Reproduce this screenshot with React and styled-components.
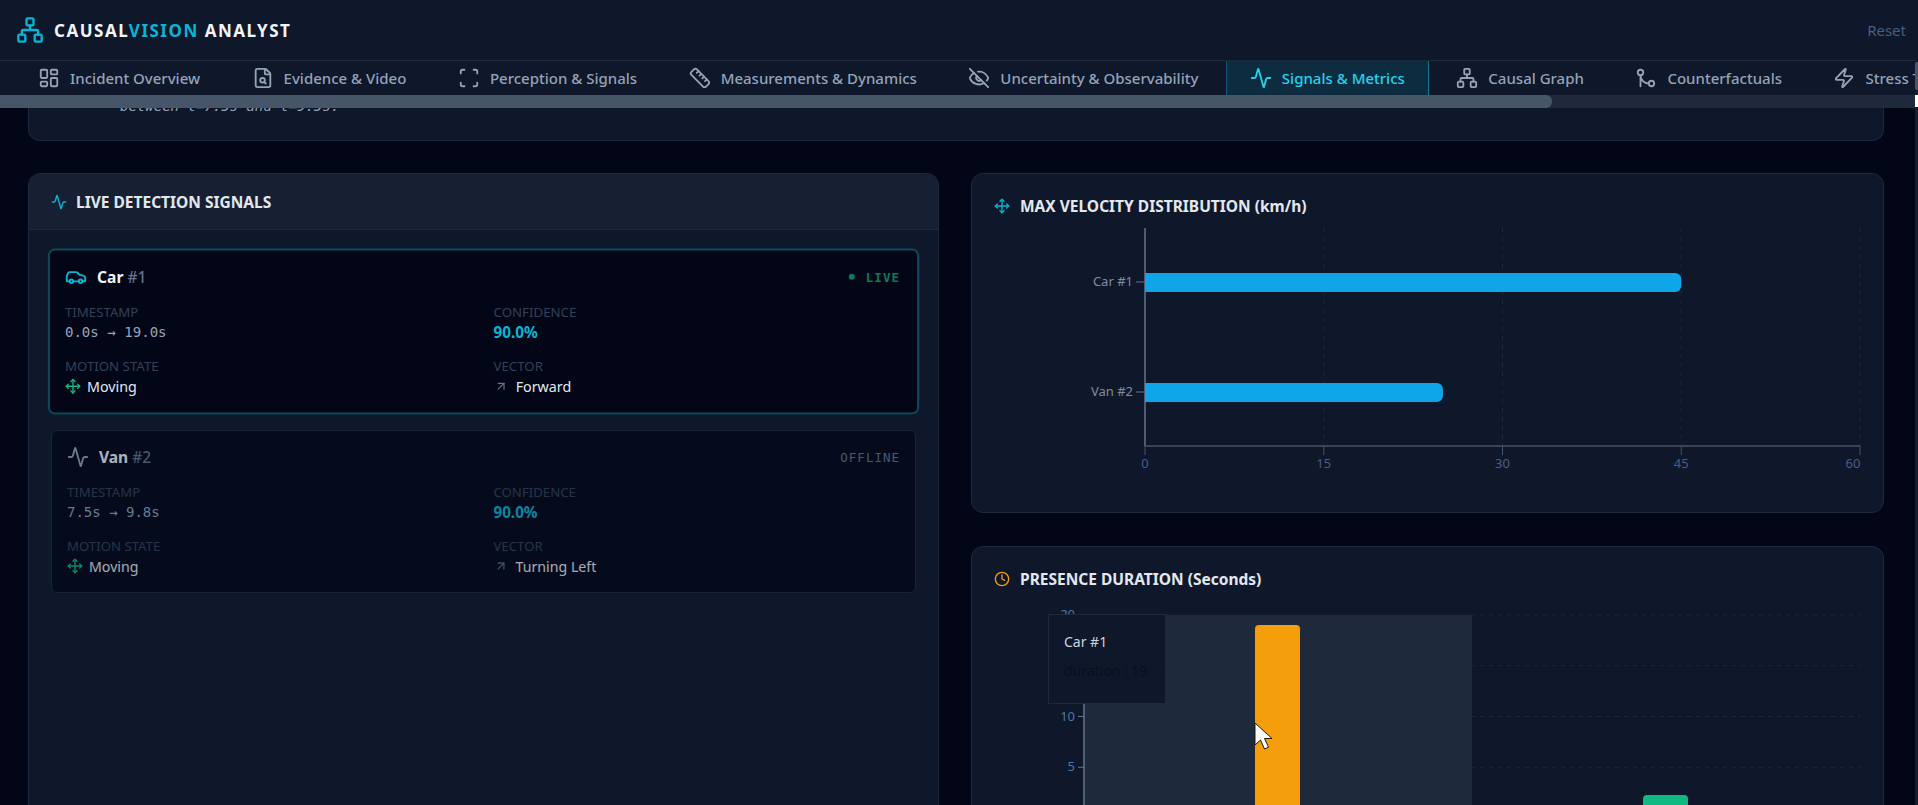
import styled, { createGlobalStyle } from 'styled-components';
import {
  Activity,
  ArrowUpRight,
  Car,
  Clock,
  EyeOff,
  FileSearch,
  GitMerge,
  LayoutDashboard,
  Move,
  Network,
  Ruler,
  Scan,
  Zap,
} from 'lucide-react';

const GlobalStyle = createGlobalStyle`
  html, body {
    margin: 0;
    height: 100%;
    overflow: hidden;
    background: #020617;
    font-family: "Noto Sans", "Open Sans", sans-serif;
  }
  * { box-sizing: border-box; }
`;

const Shell = styled.div`
  position: relative;
  display: flex;
  flex-direction: column;
  height: 805px;
  overflow: hidden;
`;
const TopBar = styled.header`
  flex: none;
  display: flex;
  align-items: center;
  justify-content: space-between;
  height: 60px;
  padding: 0 12px 0 16px;
  background: #0f172a;
`;
const Brand = styled.div`
  display: flex;
  align-items: center;
  gap: 10px;
  color: #06b6d4;
`;
const BrandName = styled.h1`
  margin: 0;
  font-size: 17px;
  font-weight: 700;
  letter-spacing: 1.5px;
  color: #f1f5f9;
`;
const BrandAccent = styled.span`
  color: #06b6d4;
`;
const ResetLink = styled.button`
  border: 0;
  padding: 0;
  background: none;
  font: inherit;
  font-size: 15px;
  color: #475f80;
`;
const TabStrip = styled.nav`
  flex: none;
  height: 35px;
  overflow: hidden;
  background: #0f172a;
  border-top: 1px solid #1e293b;
`;
const TabRow = styled.div`
  display: flex;
  gap: 3.5px;
  height: 34px;
  padding-left: 14px;
`;
const Tab = styled.button`
  flex: none;
  display: flex;
  align-items: center;
  gap: 10px;
  height: 34px;
  padding: 0 23px;
  border: 0;
  border-left: 1px solid ${(p) => (p.$active ? '#0e5a70' : 'transparent')};
  border-right: 1px solid ${(p) => (p.$active ? '#0e7490' : 'transparent')};
  background: ${(p) => (p.$active ? '#0e2c40' : 'transparent')};
  font: inherit;
  font-size: 15px;
  font-weight: 500;
  white-space: nowrap;
  color: ${(p) => (p.$active ? '#22d3ee' : '#94a3b8')};
`;
const ScrollTrack = styled.div`
  flex: none;
  height: 13px;
  background: #1e293b;
`;
const ScrollThumb = styled.div`
  height: 100%;
  width: ${(p) => p.$width}px;
  background: #475569;
  border-radius: 0 6px 6px 0;
`;
const PageRail = styled.div`
  position: absolute;
  top: 60px;
  right: 0;
  bottom: 0;
  width: 3px;
  background: #151c2c;
`;
const RailThumb = styled.div`
  height: 28px;
  margin-top: 2px;
  background: #4b5563;
  border-radius: 2px 0 0 2px;
`;
const RailCorner = styled.div`
  height: 12px;
  margin-top: 5px;
  background: #fff;
`;
const Main = styled.main`
  flex: 1;
  min-height: 0;
  overflow: hidden;
  padding: 0 34px 0 28px;
`;
const SummaryCard = styled.section`
  display: flex;
  align-items: flex-end;
  height: 33px;
  padding: 0 0 26px 91px;
  background: #0f172a;
  border: 1px solid #1e293b;
  border-top: 0;
  border-radius: 0 0 12px 12px;
`;
const SummaryText = styled.p`
  margin: 0;
  font-family: "DejaVu Sans Mono", monospace;
  font-style: italic;
  font-size: 14px;
  line-height: 16px;
  white-space: nowrap;
  color: #94a3b8;
`;
const Columns = styled.div`
  display: grid;
  grid-template-columns: 911px 913px;
  gap: 32px;
  margin-top: 32px;
`;
const SignalPanel = styled.section`
  height: 800px;
  background: #0f172a;
  border: 1px solid #1e293b;
  border-radius: 12px;
  overflow: hidden;
`;
const PanelHead = styled.div`
  display: flex;
  align-items: center;
  gap: 9px;
  height: 56px;
  padding: 0 22px;
  background: #172032;
  border-bottom: 1px solid #1e293b;
  color: #06b6d4;
`;
const SectionTitle = styled.h2`
  margin: 0;
  font-size: 15.5px;
  font-weight: 700;
  white-space: nowrap;
  color: #e2e8f0;
`;
const SignalList = styled.div`
  display: flex;
  flex-direction: column;
  gap: 17px;
  padding: 20px 22px;
`;
const SignalCard = styled.article`
  padding: 15px 15px 16px;
  background: #020617;
  border: 1px solid ${(p) => (p.$live ? '#0e4a5c' : '#1e293b')};
  border-radius: 6px;
  box-shadow: ${(p) => (p.$live ? '0 0 0 1px #0e4a5c' : 'none')};
  transform: ${(p) => (p.$live ? 'scale(1.005)' : 'none')};
  opacity: ${(p) => (p.$live ? 1 : 0.7)};
`;
const SignalHead = styled.div`
  display: flex;
  align-items: flex-start;
  justify-content: space-between;
  height: 26px;
  margin-bottom: 12px;
`;
const SignalName = styled.div`
  display: flex;
  align-items: center;
  gap: 10px;
  height: 22px;
  font-size: 15.5px;
  font-weight: 700;
  color: #f1f5f9;
  svg { color: ${(p) => (p.$live ? '#06b6d4' : '#94a3b8')}; }
`;
const SignalId = styled.span`
  font-weight: 500;
  color: #64748b;
`;
const Status = styled.div`
  display: flex;
  align-items: center;
  gap: 11px;
  height: 22px;
  padding-right: ${(p) => (p.$live ? '2px' : '0')};
  font-family: "DejaVu Sans Mono", monospace;
  font-size: 12.5px;
  font-weight: ${(p) => (p.$live ? 700 : 400)};
  letter-spacing: 1px;
  color: ${(p) => (p.$live ? '#0b7a5a' : '#64748b')};
`;
const StatusDot = styled.span`
  width: 6px;
  height: 6px;
  border-radius: 50%;
  background: #0b7a5a;
`;
const FieldGrid = styled.div`
  display: grid;
  grid-template-columns: 1fr 1fr;
  gap: 16px 20px;
`;
const FieldLabel = styled.div`
  margin-bottom: 2px;
  font-size: 13.2px;
  line-height: 16px;
  color: #334155;
`;
const MonoValue = styled.div`
  height: 20px;
  font-family: "DejaVu Sans Mono", monospace;
  font-size: 14px;
  line-height: 20px;
  color: #94a3b8;
`;
const ConfidenceValue = styled.div`
  height: 20px;
  font-size: 15.2px;
  font-weight: 700;
  line-height: 20px;
  color: #06b6d4;
`;
const IconValue = styled.div`
  display: flex;
  align-items: center;
  gap: ${(p) => (p.$wide ? '8px' : '6px')};
  height: 20px;
  font-size: 14.2px;
  color: #e2e8f0;
  svg { color: ${(p) => p.$tint}; }
`;
const ChartStack = styled.div`
  display: flex;
  flex-direction: column;
  gap: 33px;
`;
const ChartCard = styled.section`
  position: relative;
  height: ${(p) => p.$height}px;
  padding: 20px 22px 0;
  background: #0f172a;
  border: 1px solid #1e293b;
  border-radius: 12px;
`;
const ChartHead = styled.div`
  position: relative;
  display: flex;
  align-items: center;
  gap: 10px;
  height: 24px;
  color: ${(p) => p.$tint};
`;
const ChartFrame = styled.svg`
  display: block;
  position: absolute;
  left: 0;
  top: 0;
  font-family: "Noto Sans", sans-serif;
  font-size: 13px;
`;
const Tooltip = styled.div`
  position: absolute;
  left: 76px;
  top: 67px;
  width: 118px;
  height: 90px;
  padding: 15px;
  background: #0f172a;
  border: 1px solid #1e293b;
`;
const TooltipName = styled.div`
  font-size: 14px;
  line-height: 24px;
  color: #cbd5e1;
`;
const TooltipValue = styled.div`
  margin-top: 5px;
  font-size: 14px;
  line-height: 24px;
  white-space: nowrap;
  color: #0a0f1c;
`;
const Pointer = styled.svg`
  position: absolute;
  left: 282px;
  top: 175px;
`;

const tabs = [
  { label: 'Incident Overview', icon: LayoutDashboard },
  { label: 'Evidence & Video', icon: FileSearch },
  { label: 'Perception & Signals', icon: Scan },
  { label: 'Measurements & Dynamics', icon: Ruler },
  { label: 'Uncertainty & Observability', icon: EyeOff },
  { label: 'Signals & Metrics', icon: Activity, active: true },
  { label: 'Causal Graph', icon: Network },
  { label: 'Counterfactuals', icon: GitMerge },
  { label: 'Stress Test', icon: Zap },
];

const signals = [
  { name: 'Car', id: '#1', time: '0.0s → 19.0s', vector: 'Forward', icon: Car, live: true },
  { name: 'Van', id: '#2', time: '7.5s → 9.8s', vector: 'Turning Left', icon: Activity, live: false },
];

function SignalEntry({ signal }) {
  const Icon = signal.icon;
  return (
    <SignalCard $live={signal.live}>
      <SignalHead>
        <SignalName $live={signal.live}>
          <Icon size={22} />
          <span>
            {signal.name} <SignalId>{signal.id}</SignalId>
          </span>
        </SignalName>
        <Status $live={signal.live}>
          {signal.live && <StatusDot />}
          {signal.live ? 'LIVE' : 'OFFLINE'}
        </Status>
      </SignalHead>
      <FieldGrid>
        <div>
          <FieldLabel>TIMESTAMP</FieldLabel>
          <MonoValue>{signal.time}</MonoValue>
        </div>
        <div>
          <FieldLabel>CONFIDENCE</FieldLabel>
          <ConfidenceValue>90.0%</ConfidenceValue>
        </div>
        <div>
          <FieldLabel>MOTION STATE</FieldLabel>
          <IconValue $tint="#10b981">
            <Move size={16} />
            Moving
          </IconValue>
        </div>
        <div>
          <FieldLabel>VECTOR</FieldLabel>
          <IconValue $wide $tint="#64748b">
            <ArrowUpRight size={14} />
            {signal.vector}
          </IconValue>
        </div>
      </FieldGrid>
    </SignalCard>
  );
}

// chart coordinates are relative to the card's padding box
function VelocityChart() {
  const x0 = 173;
  const xEnd = 888;
  const top = 54;
  const base = 272;
  const unit = (xEnd - x0) / 60;
  const ticks = [0, 15, 30, 45, 60];
  const rows = [
    { label: 'Car #1', value: 45, y: 99 },
    { label: 'Van #2', value: 25, y: 209 },
  ];
  return (
    <ChartFrame width="912" height="338">
      {ticks.slice(1).map((t) => (
        <line key={t} x1={x0 + t * unit} x2={x0 + t * unit} y1={top} y2={base} stroke="#1e293b" strokeDasharray="4 5" />
      ))}
      <line x1={x0} x2={x0} y1={top} y2={base} stroke="#64748b" strokeWidth="1.5" />
      <line x1={x0} x2={xEnd} y1={base} y2={base} stroke="#475569" strokeWidth="1.5" />
      {ticks.map((t) => (
        <g key={t}>
          <line x1={x0 + t * unit} x2={x0 + t * unit} y1={base} y2={base + 9} stroke="#475569" />
          <text x={t === 60 ? xEnd - 7 : x0 + t * unit} y={base + 22} textAnchor="middle" fill="#475f86">
            {t}
          </text>
        </g>
      ))}
      {rows.map((row) => (
        <g key={row.label}>
          <line x1={x0 - 9} x2={x0} y1={row.y + 9} y2={row.y + 9} stroke="#64748b" />
          <text x={x0 - 12} y={row.y + 13} textAnchor="end" fill="#7f8da3">
            {row.label}
          </text>
          <path
            d={`M${x0} ${row.y}H${x0 + row.value * unit - 6}a6 6 0 0 1 6 6v7a6 6 0 0 1 -6 6H${x0}Z`}
            fill="#0ea5e9"
          />
        </g>
      ))}
    </ChartFrame>
  );
}

function PresenceChart() {
  const x0 = 112;
  const xEnd = 888;
  const base = 271;
  const unit = 10.15;
  const ticks = [5, 10, 15, 20];
  return (
    <ChartFrame width="912" height="298">
      <rect x={x0} y={base - 20 * unit} width={388} height={20 * unit + 2} fill="#1e293b" />
      {ticks.map((t) => (
        <g key={t}>
          <line x1={x0} x2={xEnd} y1={base - t * unit} y2={base - t * unit} stroke="#1e293b" strokeDasharray="4 5" />
          <line x1={x0 - 6} x2={x0} y1={base - t * unit} y2={base - t * unit} stroke="#64748b" />
          <text x={x0 - 9} y={base - t * unit + 4} textAnchor="end" fill="#4a78a8">
            {t}
          </text>
        </g>
      ))}
      <line x1={x0} x2={x0} y1={base - 20 * unit} y2={base} stroke="#64748b" strokeWidth="1.5" />
      <path d={`M283 ${base + 4}V82a4 4 0 0 1 4 -4h37a4 4 0 0 1 4 4V${base + 4}Z`} fill="#f59e0b" />
      <path d={`M671 ${base + 4}V252a4 4 0 0 1 4 -4h37a4 4 0 0 1 4 4V${base + 4}Z`} fill="#10b981" />
    </ChartFrame>
  );
}

export default function App() {
  return (
    <Shell>
      <GlobalStyle />
      <TopBar>
        <Brand>
          <Network size={28} />
          <BrandName>
            CAUSAL<BrandAccent>VISION</BrandAccent> ANALYST
          </BrandName>
        </Brand>
        <ResetLink>Reset</ResetLink>
      </TopBar>
      <TabStrip>
        <TabRow>
          {tabs.map((tab) => {
            const Icon = tab.icon;
            return (
              <Tab key={tab.label} $active={tab.active}>
                <Icon size={22} />
                {tab.label}
              </Tab>
            );
          })}
        </TabRow>
      </TabStrip>
      <ScrollTrack>
        <ScrollThumb $width={1552} />
      </ScrollTrack>
      <Main>
        <SummaryCard>
          <SummaryText>between t=7.5s and t=9.5s.</SummaryText>
        </SummaryCard>
        <Columns>
          <SignalPanel>
            <PanelHead>
              <Activity size={16} />
              <SectionTitle>LIVE DETECTION SIGNALS</SectionTitle>
            </PanelHead>
            <SignalList>
              {signals.map((signal) => (
                <SignalEntry key={signal.name} signal={signal} />
              ))}
            </SignalList>
          </SignalPanel>
          <ChartStack>
            <ChartCard $height={340}>
              <VelocityChart />
              <ChartHead $tint="#06b6d4">
                <Move size={16} />
                <SectionTitle>MAX VELOCITY DISTRIBUTION (km/h)</SectionTitle>
              </ChartHead>
            </ChartCard>
            <ChartCard $height={300}>
              <PresenceChart />
              <ChartHead $tint="#f59e0b">
                <Clock size={16} />
                <SectionTitle>PRESENCE DURATION (Seconds)</SectionTitle>
              </ChartHead>
              <Tooltip>
                <TooltipName>Car #1</TooltipName>
                <TooltipValue>duration : 19</TooltipValue>
              </Tooltip>
              <Pointer width="20" height="30" viewBox="0 0 20 30">
                <path d="M1 1v22l5.5-5 4 9 4-1.8-4-8.7h7.5z" fill="#fff" stroke="#1a1a1a" strokeWidth="1" />
              </Pointer>
            </ChartCard>
          </ChartStack>
        </Columns>
      </Main>
      <PageRail>
        <RailThumb />
        <RailCorner />
      </PageRail>
    </Shell>
  );
}
